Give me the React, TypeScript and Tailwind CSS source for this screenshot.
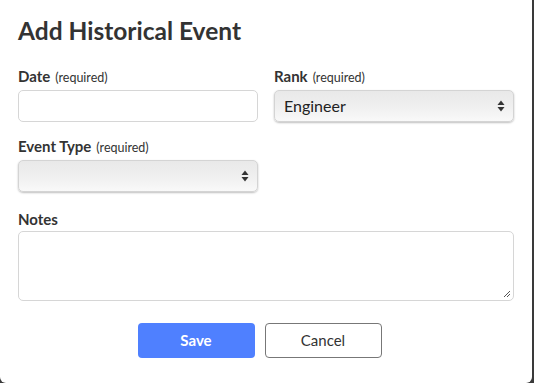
import React from 'react';

const Arrows: React.FC = () => (
  <svg width="8" height="12" viewBox="0 0 8 12" className="absolute right-[8px] top-1/2 -translate-y-1/2">
    <path d="M4 0.5 L7.5 5 L0.5 5 Z" fill="#333" />
    <path d="M4 11.5 L7.5 7 L0.5 7 Z" fill="#333" />
  </svg>
);

const Label: React.FC<{ text: string; required?: boolean }> = ({ text, required }) => (
  <label className="block text-[15px] leading-[18px] font-bold text-[#333] mb-[3px]">
    {text}
    {required && <span className="font-normal text-[12.5px] ml-[5px]">(required)</span>}
  </label>
);

const SelectBox: React.FC<{ value?: string }> = ({ value }) => (
  <div className="relative h-[32px] rounded-[5px] bg-gradient-to-b from-[#e9e9e9] via-[#efefef] to-[#f9f9f9] shadow-[0_1px_2px_rgba(0,0,0,0.25)] border border-[#d4d4d4]">
    <span className="absolute left-[9px] top-1/2 -translate-y-1/2 text-[16px] text-[#222]">{value}</span>
    <Arrows />
  </div>
);

export default function App() {
  return (
    <div className="w-[534px] h-[383px] bg-[#3a3a3a] font-['Lato','Liberation_Sans',sans-serif]">
      <div className="w-[532px] h-[383px] bg-white rounded-b-[6px] px-[18px] pt-[16px]">
        <h2 className="text-[24.5px] leading-[30px] font-bold text-[#333]">Add Historical Event</h2>

        <div className="grid grid-cols-2 gap-x-[16px] mt-[21px]">
          <div>
            <Label text="Date" required />
            <div className="h-[32px] rounded-[5px] border border-[#d6d6d6] bg-white" />
          </div>
          <div>
            <Label text="Rank" required />
            <SelectBox value="Engineer" />
          </div>
        </div>

        <div className="grid grid-cols-2 gap-x-[16px] mt-[15px]">
          <div>
            <Label text="Event Type" required />
            <SelectBox />
          </div>
        </div>

        <div className="mt-[18px]">
          <Label text="Notes" />
          <div className="relative h-[70px] rounded-[5px] border border-[#d6d6d6] bg-white">
            <svg width="8" height="8" viewBox="0 0 8 8" className="absolute right-[2px] bottom-[2px]">
              <path d="M1 7 L7 1 M4 7 L7 4" stroke="#555" strokeWidth="1" />
            </svg>
          </div>
        </div>

        <div className="flex justify-center gap-[10px] mt-[22px] pr-[13px]">
          <button className="w-[117px] h-[35px] rounded-[4px] bg-[#4f80ff] text-white text-[15px] font-bold">Save</button>
          <button className="w-[117px] h-[35px] rounded-[4px] border border-[#777] bg-white text-[#333] text-[15px]">Cancel</button>
        </div>
      </div>
    </div>
  );
}
